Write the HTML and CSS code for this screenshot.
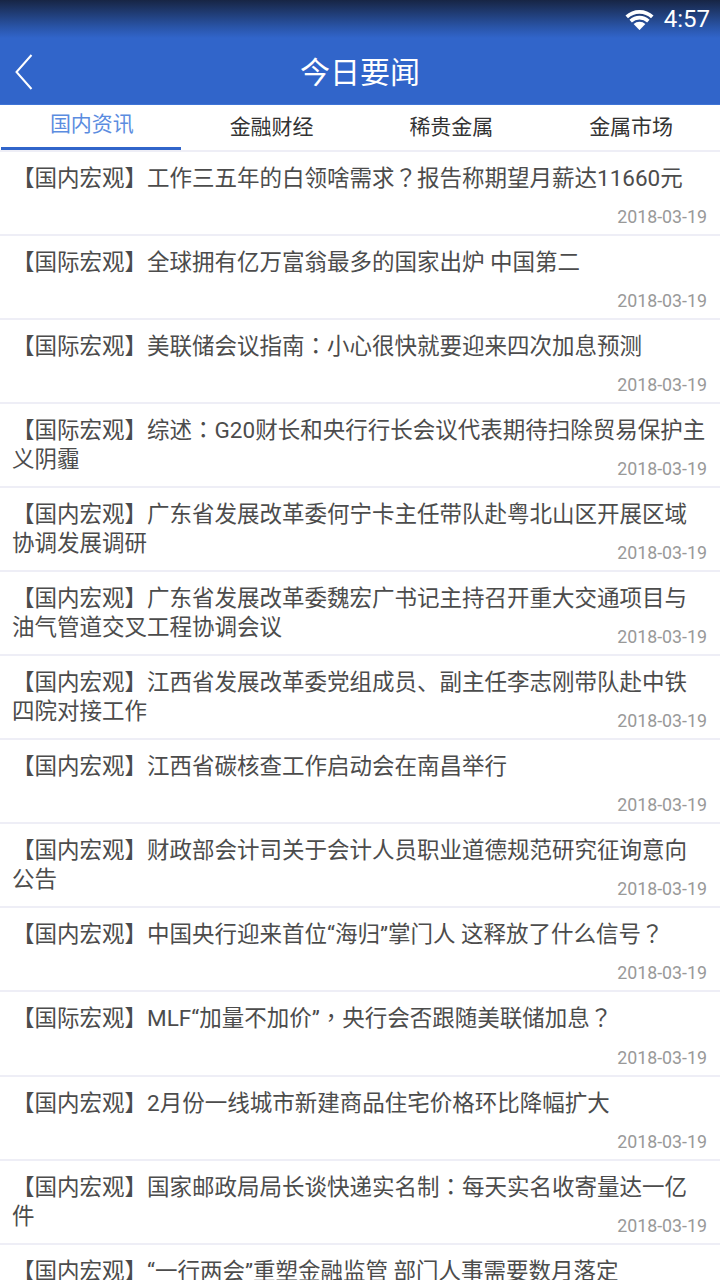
FILE: index.html
```html
<!doctype html>
<html lang="zh-CN">
<head>
    <meta charset="UTF-8">
    <title>今日要闻</title>
    <link rel="stylesheet" href="styles.css">
</head>
<body>
<div class="header">
    <div class="status">
        <svg class="wifi" width="29" height="22" viewBox="0 0 30 22">
            <path d="M0.5 7.5 A21 21 0 0 1 29.5 7.5 L26.9 10.3 A17.4 17.4 0 0 0 3.1 10.3 Z" fill="#fff"/>
            <path d="M4.6 11.8 A15.4 15.4 0 0 1 25.4 11.8 L22.9 14.5 A11.8 11.8 0 0 0 7.1 14.5 Z" fill="#fff"/>
            <path d="M8.9 16.2 A9.2 9.2 0 0 1 21.1 16.2 L15 22.5 Z" fill="#fff"/>
        </svg>
        <span class="time">4:57</span>
    </div>
    <div class="title-bar">
        <svg class="back" width="20" height="36" viewBox="0 0 20 36">
            <path d="M17.5 1 L2.5 18 L17.5 35" fill="none" stroke="#fff" stroke-width="2"/>
        </svg>
        <h1 class="title">今日要闻</h1>
    </div>
</div>
<ul class="tabs">
    <li class="active">国内资讯</li>
    <li>金融财经</li>
    <li>稀贵金属</li>
    <li>金属市场</li>
</ul>
<ul class="news">
    <li><p>【国内宏观】工作三五年的白领啥需求<i lang="zh-TW">？</i>报告称期望月薪达11660元</p><span class="date">2018-03-19</span></li>
    <li><p>【国际宏观】全球拥有亿万富翁最多的国家出炉 中国第二</p><span class="date">2018-03-19</span></li>
    <li><p>【国际宏观】美联储会议指南<i lang="zh-TW">：</i>小心很快就要迎来四次加息预测</p><span class="date">2018-03-19</span></li>
    <li><p>【国际宏观】综述<i lang="zh-TW">：</i>G20财长和央行行长会议代表期待扫除贸易保护主义阴霾</p><span class="date">2018-03-19</span></li>
    <li><p>【国内宏观】广东省发展改革委何宁卡主任带队赴粤北山区开展区域协调发展调研</p><span class="date">2018-03-19</span></li>
    <li><p>【国内宏观】广东省发展改革委魏宏广书记主持召开重大交通项目与油气管道交叉工程协调会议</p><span class="date">2018-03-19</span></li>
    <li><p>【国内宏观】江西省发展改革委党组成员、副主任李志刚带队赴中铁四院对接工作</p><span class="date">2018-03-19</span></li>
    <li><p>【国内宏观】江西省碳核查工作启动会在南昌举行</p><span class="date">2018-03-19</span></li>
    <li><p>【国内宏观】财政部会计司关于会计人员职业道德规范研究征询意向公告</p><span class="date">2018-03-19</span></li>
    <li><p>【国内宏观】中国央行迎来首位“海归”掌门人 这释放了什么信号<i lang="zh-TW">？</i></p><span class="date">2018-03-19</span></li>
    <li><p>【国际宏观】MLF“加量不加价”<i lang="zh-TW">，</i>央行会否跟随美联储加息<i lang="zh-TW">？</i></p><span class="date">2018-03-19</span></li>
    <li><p>【国内宏观】2月份一线城市新建商品住宅价格环比降幅扩大</p><span class="date">2018-03-19</span></li>
    <li><p>【国内宏观】国家邮政局局长谈快递实名制<i lang="zh-TW">：</i>每天实名收寄量达一亿件</p><span class="date">2018-03-19</span></li>
    <li><p>【国内宏观】“一行两会”重塑金融监管 部门人事需要数月落定</p><span class="date">2018-03-19</span></li>
</ul>
</body>
</html>
```

FILE: styles.css
```css
* {
    margin: 0;
    padding: 0;
    list-style: none;
    box-sizing: border-box;
}
html, body {
    height: 1280px;
    overflow: hidden;
    background: #fff;
}
body {
    font-family: "Roboto", "Noto Sans CJK SC", sans-serif;
}
.header {
    height: 105px;
    background: linear-gradient(180deg, #172544 0, #2a56ab 28px, #3165ca 38px, #3165ca 100%);
    border-bottom: 1px solid #3f74d6;
}
.status {
    height: 38px;
    display: flex;
    justify-content: flex-end;
    align-items: center;
    padding-right: 10px;
    gap: 10px;
}
.wifi {
    display: block;
}
.time {
    font-family: "Roboto", sans-serif;
    font-size: 24px;
    color: #fff;
}
.title-bar {
    height: 66px;
    position: relative;
    display: flex;
    align-items: center;
    justify-content: center;
}
.back {
    position: absolute;
    left: 14px;
    top: 16px;
}
.title {
    font-size: 30px;
    font-weight: 400;
    color: #fff;
    margin-top: -2px;
}
.tabs {
    height: 46.5px;
    display: flex;
    padding-left: 1px;
    border-bottom: 2px solid #eeeef6;
}
.tabs li {
    width: 180px;
    padding-left: 2px;
    font-size: 21px;
    line-height: 44px;
    text-align: center;
    color: #333;
}
.tabs li.active {
    height: 45px;
    color: #5b8ce0;
    line-height: 38px;
    border-bottom: 3px solid #3165ca;
}
.news li {
    height: 84.1px;
    padding: 12px 13px 0 12px;
    border-bottom: 2px solid #eeeef6;
    position: relative;
}
.news p {
    font-size: 22.5px;
    line-height: 29px;
    color: #4c4c4c;
}
/* full-width punctuation sits centred in its cell on the device */
.news i {
    font-style: normal;
    font-family: "Noto Sans CJK TC", sans-serif;
    line-height: 0;
}
.date {
    position: absolute;
    right: 13px;
    bottom: 5px;
    font-family: "Roboto", sans-serif;
    font-size: 17.8px;
    line-height: 24px;
    color: #999;
}
```
